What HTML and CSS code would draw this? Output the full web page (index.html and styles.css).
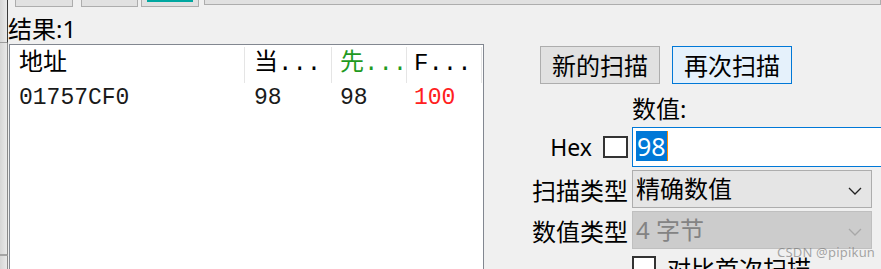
FILE: index.html
```html
<!DOCTYPE html>
<html lang="zh-CN">
<head>
<meta charset="UTF-8">
<meta name="viewport" content="width=device-width, initial-scale=1.0">
<title>扫描</title>
<link rel="stylesheet" href="styles.css">
</head>
<body>
<div class="edge">
    <div class="edge-top"></div>
    <div class="edge-mid"></div>
    <div class="edge-bottom"></div>
</div>

<div class="window">
    <div class="topbar">
        <div class="tab tab-1"></div>
        <div class="tab tab-2"></div>
        <div class="tab tab-3"></div>
        <div class="tab tab-rest"></div>
    </div>

    <div class="content">
        <div class="left">
            <div class="result">结果:1</div>
            <div class="list">
                <div class="list-head">
                    <div class="col col-addr">地址</div>
                    <div class="col col-cur">当...</div>
                    <div class="col col-prev">先...</div>
                    <div class="col col-first">F...</div>
                </div>
                <div class="list-row">
                    <div class="col col-addr">01757CF0</div>
                    <div class="col col-cur">98</div>
                    <div class="col col-prev">98</div>
                    <div class="col col-first red">100</div>
                </div>
            </div>
        </div>

        <div class="right">
            <div class="scan-buttons">
                <button class="btn">新的扫描</button>
                <button class="btn btn-focus">再次扫描</button>
            </div>

            <div class="form">
                <div class="value-label">数值:</div>

                <div class="label hex-label">Hex <span class="check"></span></div>
                <div class="value-input"><span class="selected">98</span><span class="caret"></span></div>

                <div class="label">扫描类型</div>
                <div class="combo">精确数值
                    <svg class="chev" width="14" height="9" viewBox="0 0 14 9"><polyline points="1,1 7,7 13,1" fill="none" stroke="#222" stroke-width="1.3"/></svg>
                </div>
                <div class="bar"></div>

                <div class="label">数值类型</div>
                <div class="combo disabled">4 字节
                    <svg class="chev" width="14" height="9" viewBox="0 0 14 9"><polyline points="1,1 7,7 13,1" fill="none" stroke="#a8a8a8" stroke-width="1.3"/></svg>
                </div>
                <div class="bar"></div>

                <div class="label"></div>
                <div class="compare"><span class="check"></span>对比首次扫描</div>
                <div class="bar bar-low"></div>
            </div>
        </div>
    </div>
</div>

<div class="watermark">CSDN @pipikun</div>
</body>
</html>
```

FILE: styles.css
```css
body {
    margin: 0;
    padding: 0;
    width: 881px;
    height: 269px;
    overflow: hidden;
    display: flex;
    background-color: #f0f0f0;
    font-family: "Noto Sans", "Noto Sans CJK SC", sans-serif;
    color: #000;
    position: relative;
}
/* strip of the window behind, on the left */
.edge {
    width: 8px;
    display: flex;
    flex-direction: column;
    flex-shrink: 0;
}
.edge div {
    background: linear-gradient(to right, #d6d6d6, #e9e9e9);
}
.edge-top {
    height: 42px;
    border-right: 1px solid #3a3a3a;
    border-bottom: 1px solid #9c9c9c;
}
.edge-mid {
    height: 211px;
    border-right: 1px solid #8a8a8a;
    border-bottom: 2px solid #a4a4a4;
}
.edge-bottom {
    flex: 1;
    border-right: 1px solid #8a8a8a;
}
.window {
    flex: 1;
    display: flex;
    flex-direction: column;
    min-width: 0;
}
.topbar {
    height: 7px;
    display: flex;
    align-items: flex-start;
    padding-left: 7px;
}
.tab {
    background-color: #e1e1e1;
    border: 1px solid #adadad;
    border-top: none;
    box-sizing: border-box;
    height: 7px;
}
.tab-1 { width: 58px; }
.tab-2 { width: 57px; margin-left: 8px; }
.tab-3 { width: 58px; margin-left: 3px; position: relative; }
.tab-3::before {
    content: "";
    position: absolute;
    left: 5px;
    right: 5px;
    top: 0;
    height: 2px;
    background-color: #00a7a0;
}
.tab-rest {
    flex: 1;
    height: 5px;
    margin-left: 5px;
}
.content {
    flex: 1;
    display: flex;
}
.left {
    width: 476px;
    flex-shrink: 0;
    display: flex;
    flex-direction: column;
}
.result {
    margin-top: 6px;
    line-height: 31px;
    height: 31px;
    font-size: 24px;
}
.list {
    flex: 1;
    margin-left: 1px;
    background-color: #fff;
    border: 1px solid #828790;
    border-bottom: none;
    font-family: "Liberation Mono", "Noto Sans CJK SC", monospace;
    font-size: 23px;
}
.list-head {
    display: flex;
    height: 38px;
    padding-top: 2px;
    box-sizing: border-box;
    font-size: 24px;
}
.list-head .col {
    border-right: 1px solid #e5e5e5;
    line-height: 34px;
}
.list-row {
    display: flex;
    height: 30px;
    line-height: 30px;
    color: #1a1a1a;
}
.col {
    box-sizing: border-box;
    padding-left: 9px;
    white-space: nowrap;
    overflow: hidden;
}
.col-addr { width: 235px; }
.col-cur { width: 87px; }
.col-prev { width: 75px; padding-left: 8px; }
.col-first { width: 75px; padding-left: 7px; }
.list-head .col-prev { color: #1f9a1f; }
.red { color: #ff2020; }

.right {
    flex: 1;
    padding-top: 39px;
    font-size: 24px;
}
.scan-buttons {
    display: flex;
    gap: 12px;
    padding-left: 56px;
}
.btn {
    width: 120px;
    height: 38px;
    background-color: #e1e1e1;
    border: 1px solid #adadad;
    font-family: "Noto Sans CJK SC", sans-serif;
    font-size: 24px;
    color: #000;
    padding: 0;
    line-height: 36px;
}
.btn-focus {
    background-color: #e5f1fb;
    border-color: #0078d7;
}
.form {
    display: grid;
    grid-template-columns: 144px 240px 6px 2px;
    column-gap: 4px;
    row-gap: 3px;
    align-items: center;
}
.value-label {
    grid-column: 2 / 5;
    line-height: 30px;
    padding-top: 10px;
}
.label {
    text-align: right;
    white-space: nowrap;
}
.hex-label {
    display: flex;
    justify-content: flex-end;
    align-items: center;
    gap: 11px;
    font-size: 23px;
}
.check {
    display: inline-block;
    flex-shrink: 0;
    width: 25px;
    height: 22px;
    box-sizing: border-box;
    border: 2px solid #333;
    background-color: #fff;
}
.value-input {
    grid-column: 2 / 5;
    width: 270px;
    height: 40px;
    box-sizing: border-box;
    border: 1px solid #0078d7;
    background-color: #fff;
    padding: 3px 0 0 3px;
    display: flex;
    align-items: flex-start;
}
.selected {
    background-color: #0078d7;
    color: #fff;
    line-height: 30px;
    height: 30px;
    padding: 0 1px;
    font-size: 25px;
}
.caret {
    width: 1px;
    height: 30px;
    background-color: #ff8a00;
}
.combo {
    height: 38px;
    box-sizing: border-box;
    border: 1px solid #adadad;
    background-color: #e5e5e5;
    padding-left: 3px;
    line-height: 36px;
    position: relative;
}
.combo.disabled {
    background-color: #cccccc;
    border-color: #bfbfbf;
    color: #838383;
}
.chev {
    position: absolute;
    right: 9px;
    top: 16px;
}
.bar {
    grid-column: 4;
    height: 26px;
    background-color: #111;
    align-self: start;
    margin-top: 5px;
}
.bar-low {
    margin-top: 13px;
    height: 20px;
}
.compare {
    display: flex;
    align-items: flex-start;
    gap: 11px;
    line-height: 28px;
    white-space: nowrap;
}
.compare .check {
    width: 24px;
    height: 26px;
    margin-top: 1px;
}
.watermark {
    position: absolute;
    left: 777px;
    top: 243px;
    font-family: "Noto Sans", sans-serif;
    font-size: 13px;
    color: rgba(110, 110, 110, 0.6);
    letter-spacing: 0.2px;
}
```
